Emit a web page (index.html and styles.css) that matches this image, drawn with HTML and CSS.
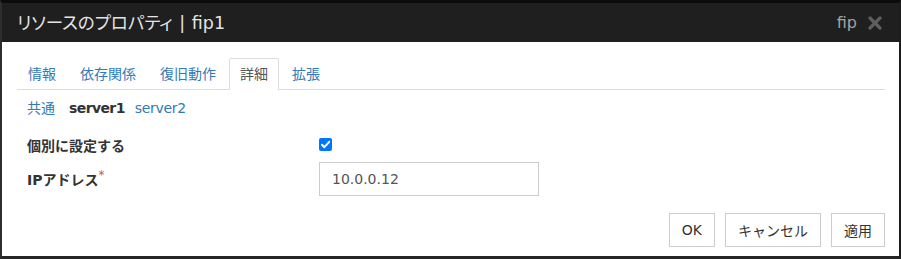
FILE: index.html
```html
<!DOCTYPE html>
<html lang="ja">
<head>
<meta charset="utf-8">
<link rel="stylesheet" href="styles.css">
</head>
<body>
<div class="frame">
  <div class="dialog">
    <div class="header">
      <div class="title">リソースのプロパティ | fip1</div>
      <div class="header-right">
        <span class="type">fip</span>
        <svg class="close" width="14" height="14" viewBox="0 0 14 14"><path d="M2 2 L12 12 M12 2 L2 12" stroke="#5e5e5e" stroke-width="3.2" stroke-linecap="round"/></svg>
      </div>
    </div>
    <div class="body">
      <ul class="tabs">
        <li class="tab">情報</li>
        <li class="tab">依存関係</li>
        <li class="tab">復旧動作</li>
        <li class="tab active">詳細</li>
        <li class="tab">拡張</li>
      </ul>
      <div class="servers">
        <span class="link">共通</span>
        <span class="current">server1</span>
        <span class="link">server2</span>
      </div>
      <div class="row">
        <div class="label">個別に設定する</div>
        <div class="field"><span class="check"><svg width="13" height="13" viewBox="0 0 13 13"><path d="M3 6.8 L5.4 9.2 L10.2 3.8" fill="none" stroke="#fff" stroke-width="2" stroke-linecap="round" stroke-linejoin="round"/></svg></span></div>
      </div>
      <div class="row">
        <div class="label">IPアドレス<sup class="req">*</sup></div>
        <div class="field"><div class="input">10.0.0.12</div></div>
      </div>
      <div class="buttons">
        <button class="btn">OK</button>
        <button class="btn">キャンセル</button>
        <button class="btn">適用</button>
      </div>
    </div>
  </div>
</div>
</body>
</html>
```
FILE: styles.css
```css
html, body {
  margin: 0;
  padding: 0;
  background: #2a2a2a;
}
body {
  font-family: "DejaVu Sans", "Noto Sans CJK JP", sans-serif;
  font-size: 14px;
  color: #333;
}
.frame {
  width: 901px;
  height: 259px;
  box-sizing: border-box;
  border-top: 3px solid #0b0b0b;
  border-left: 2px solid #2e2e2e;
  border-right: 2px solid #1c1c1c;
  border-bottom: 3px solid #262626;
}
.dialog {
  background: #fff;
  height: 100%;
  display: flex;
  flex-direction: column;
}
.header {
  height: 39px;
  background: #1f1f1f;
  display: flex;
  align-items: center;
  justify-content: space-between;
  padding: 0 17px 0 15px;
}
.title {
  color: #e4e4e4;
  font-size: 17.5px;
  line-height: 20px;
  font-feature-settings: "palt";
  word-spacing: 1px;
}
.header-right {
  display: flex;
  align-items: center;
  gap: 11px;
}
.type {
  color: #a3a3a3;
  font-size: 16px;
}
.close {
  display: block;
}
.body {
  padding: 16px 14px 0 15px;
}
.tabs {
  list-style: none;
  margin: 0;
  padding: 0;
  display: flex;
  border-bottom: 1px solid #ddd;
  height: 31px;
}
.tab {
  padding: 6px 10px 7px;
  line-height: 18px;
  border: 1px solid transparent;
  border-bottom: none;
  margin-right: 2px;
  color: #337ab7;
  border-radius: 2px 2px 0 0;
}
.tab.active {
  color: #555;
  background: #fff;
  border-color: #ddd;
  height: 32px;
  box-sizing: border-box;
}
.servers {
  display: flex;
  gap: 10px;
  margin-top: 8px;
  padding-left: 10px;
  line-height: 20px;
  height: 20px;
}
.link {
  color: #337ab7;
}
.link:last-child {
  letter-spacing: -0.3px;
}
.current {
  font-weight: bold;
  color: #333;
  margin-left: 4px;
  letter-spacing: -0.6px;
}
.servers + .row {
  margin-top: 10px;
}
.row {
  display: flex;
  align-items: center;
  height: 34px;
  padding-left: 10px;
}
.label {
  width: 292px;
  font-weight: bold;
  color: #333;
}
.req {
  color: #d9534f;
  font-weight: normal;
  font-size: 12px;
  vertical-align: 6px;
  line-height: 0;
}
.field {
  display: flex;
  align-items: center;
}
.check {
  width: 13px;
  height: 13px;
  background: #0075ff;
  border-radius: 2px;
  display: block;
  margin-top: -2px;
}
.check svg {
  display: block;
}
.input {
  width: 220px;
  height: 34px;
  box-sizing: border-box;
  border: 1px solid #ccc;
  padding: 0 12px;
  line-height: 32px;
  color: #555;
}
.buttons {
  display: flex;
  justify-content: flex-end;
  gap: 10px;
  margin-top: 17px;
}
.btn {
  font-family: inherit;
  font-size: 14px;
  height: 34px;
  padding: 0 12px;
  background: #fff;
  border: 1px solid #ccc;
  color: #333;
  border-radius: 0;
}
```
